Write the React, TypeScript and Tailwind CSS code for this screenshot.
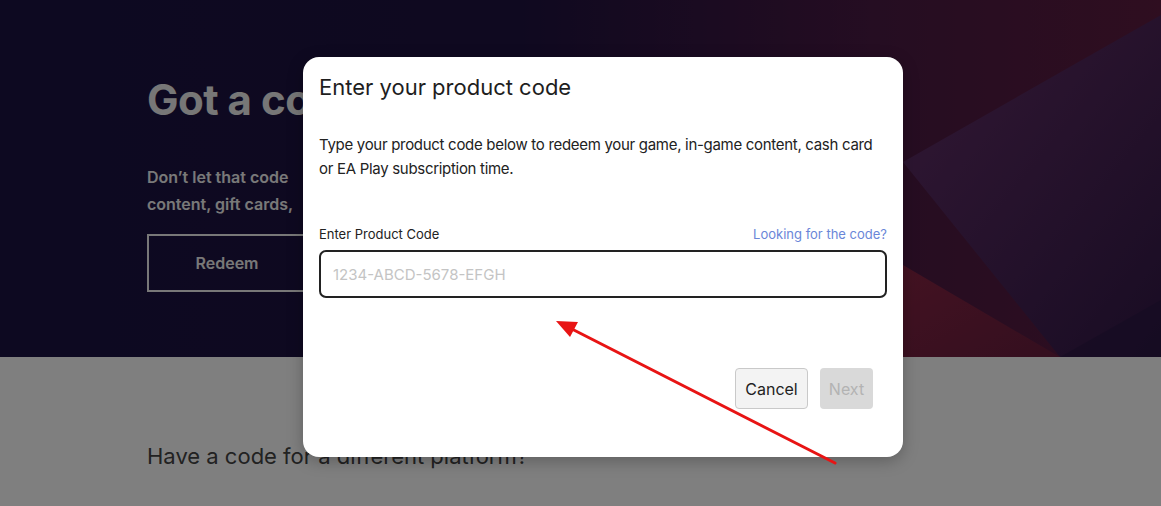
import { useState } from "react";

function HeroBackground() {
  return (
    <svg
      className="absolute inset-0 h-full w-full"
      viewBox="0 0 1161 357"
      preserveAspectRatio="none"
    >
      <defs>
        <linearGradient id="base" x1="0" y1="0" x2="1" y2="0">
          <stop offset="0" stopColor="#1a1343" />
          <stop offset="0.45" stopColor="#1f1240" />
          <stop offset="0.75" stopColor="#4a1a44" />
          <stop offset="1" stopColor="#5e1c40" />
        </linearGradient>
        <linearGradient id="purple" x1="0" y1="0" x2="1" y2="1">
          <stop offset="0" stopColor="#6a3470" />
          <stop offset="1" stopColor="#2a1848" />
        </linearGradient>
        <linearGradient id="red" x1="0" y1="0" x2="1" y2="1">
          <stop offset="0" stopColor="#8e2644" />
          <stop offset="1" stopColor="#6a1e3e" />
        </linearGradient>
      </defs>
      <rect width="1161" height="357" fill="url(#base)" />
      <polygon points="903,162 1161,15 1161,357 1060,357" fill="url(#purple)" opacity="0.85" />
      <polygon points="903,265 1060,357 903,357" fill="url(#red)" opacity="0.9" />
      <polygon points="1060,357 1161,300 1161,357" fill="#2a1844" opacity="0.6" />
    </svg>
  );
}

export default function App() {
  const [code, setCode] = useState("");

  return (
    <div className="relative h-[506px] w-[1161px] overflow-hidden bg-white font-['Inter','Liberation_Sans',sans-serif]">
      {/* page under the dialog */}
      <section className="relative h-[357px] w-full">
        <HeroBackground />
        <div className="relative flex w-[156px] flex-col overflow-hidden whitespace-nowrap pl-0 pt-[76px] ml-[147px]">
          <h1 className="text-[42px] font-bold leading-[48px] tracking-[-0.5px] text-[#eeeeee]">
            Got a code?
          </h1>
          <p className="mt-[40px] text-[16px] font-semibold leading-[27px] text-[#f2f2f2]">
            Don’t let that code
            <br />
            content, gift cards,
          </p>
          <button className="mt-[16px] flex h-[58px] w-[160px] items-center justify-center border-2 border-[#f0f0f0] text-[16px] font-semibold text-[#f0f0f0]">
            Redeem
          </button>
        </div>
      </section>
      <section className="pl-[147px] pt-[84px]">
        <h2 className="text-[22px] leading-[30px] text-[#444444]">
          Have a code for a different platform?
        </h2>
      </section>

      {/* overlay */}
      <div className="absolute inset-0 bg-black/50" />

      {/* dialog */}
      <div className="absolute left-[303px] top-[57px] flex h-[400px] w-[600px] flex-col rounded-[16px] bg-white px-[16px] pt-[16px] shadow-[0_4px_16px_rgba(0,0,0,0.25)]">
        <h3 className="text-[22px] leading-[28px] text-[#1e1e1e]">
          Enter your product code
        </h3>
        <p className="mt-[32px] whitespace-nowrap text-[15px] leading-[24px] tracking-[-0.3px] text-[#222222]">
          Type your product code below to redeem your game, in-game content, cash card
          <br />
          or EA Play subscription time.
        </p>
        <div className="mt-[44px] flex items-center justify-between text-[13px] leading-[18px]">
          <label className="text-[#222222]">Enter Product Code</label>
          <a href="#code" className="text-[#6a86d8]">
            Looking for the code?
          </a>
        </div>
        <input
          value={code}
          onChange={(e) => setCode(e.target.value)}
          placeholder="1234-ABCD-5678-EFGH"
          className="mt-[7px] h-[48px] w-full rounded-[7px] border-2 border-[#222222] px-[12px] text-[15px] text-[#222222] placeholder:text-[#c4c4c4] focus:outline-none"
        />
        <div className="mt-[70px] flex justify-end gap-[12px] pr-[14px]">
          <button className="h-[41px] w-[73px] rounded-[4px] border border-[#c9c9c9] bg-[#f3f3f3] text-[16px] text-[#222222]">
            Cancel
          </button>
          <button
            disabled
            className="h-[41px] w-[53px] rounded-[4px] bg-[#d9d9d9] text-[16px] text-[#b3b3b3]"
          >
            Next
          </button>
        </div>
      </div>

      {/* annotation arrow */}
      <svg className="pointer-events-none absolute inset-0" width="1161" height="506">
        <line x1="835" y1="463" x2="566" y2="326" stroke="#e81414" strokeWidth="3" strokeLinecap="round" />
        <polygon points="556,321 578,322 570,337" fill="#e81414" />
      </svg>
    </div>
  );
}
